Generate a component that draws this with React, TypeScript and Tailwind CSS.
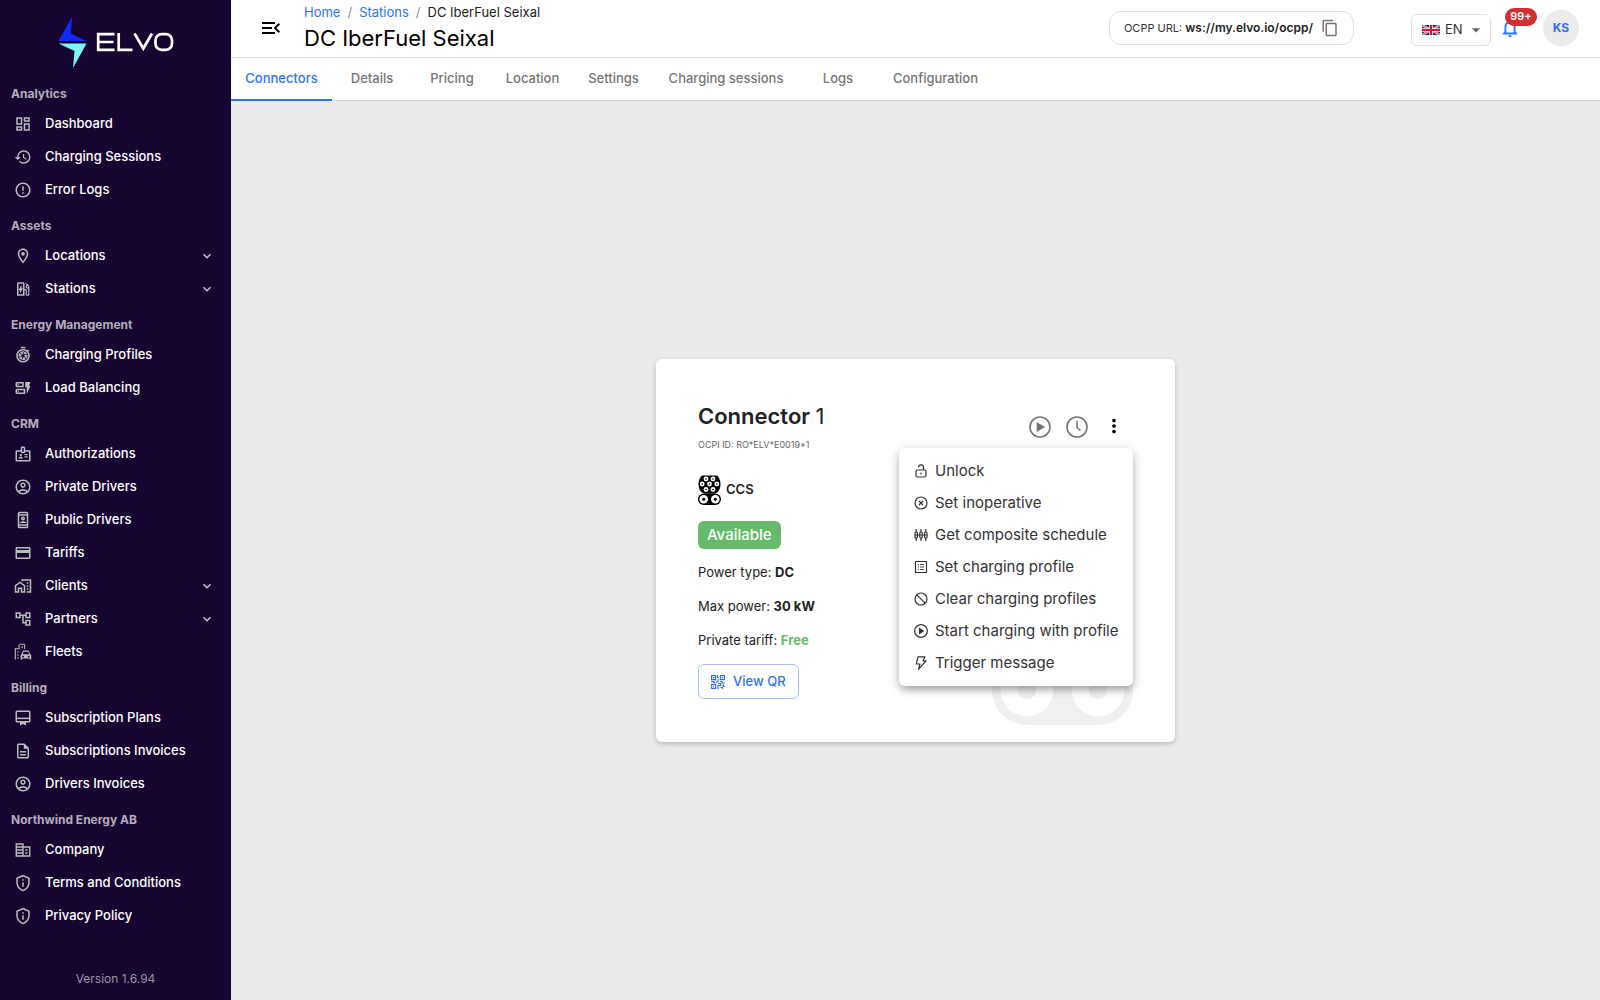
import React from "react";
import {
  MdOutlineDashboard, MdHistory, MdErrorOutline, MdOutlineLocationOn, MdOutlineEvStation, MdOutlineShutterSpeed,
  MdOutlineDynamicForm, MdOutlineBadge, MdOutlineAccountCircle, MdOutlineCreditCard, MdOutlineHomeWork,
  MdOutlineAccountTree, MdOutlineDescription, MdOutlinePrivacyTip,
  MdExpandMore, MdMenuOpen, MdContentCopy, MdNotificationsNone, MdArrowDropDown, MdMoreVert,
} from "react-icons/md";

type IconType = React.ComponentType<{ className?: string }>;

function PublicDriverIcon({ className }: { className?: string }) {
  return (
    <svg viewBox="0 0 24 24" className={className} fill="none" stroke="currentColor" strokeWidth="2" aria-hidden="true">
      <rect x="6" y="2" width="12" height="20" rx="1" />
      <path d="M6 5.200h12M6 18.500h12" />
      <circle cx="12" cy="10" r="1.700" />
      <path d="M8.800 15.400c1-1.400 5.400-1.400 6.400 0z" strokeWidth="1.400" />
    </svg>
  );
}

function PlansIcon({ className }: { className?: string }) {
  return (
    <svg viewBox="0 0 24 24" className={className} fill="none" stroke="currentColor" strokeWidth="2" aria-hidden="true">
      <rect x="3" y="3" width="18" height="14" rx="1" />
      <path d="M3 12.500h18" />
      <path d="M8 17h8v5l-4-2-4 2z" fill="currentColor" stroke="none" />
    </svg>
  );
}

function CompanyIcon({ className }: { className?: string }) {
  return (
    <svg viewBox="0 0 24 24" className={className} fill="none" stroke="currentColor" strokeWidth="1.800" aria-hidden="true">
      <path d="M3 4h9v16H3zM3 8h9M3 12h9M3 16h9" />
      <path d="M12 8h9v12h-9M15 12h3M15 16h3" />
    </svg>
  );
}

function FleetIcon({ className }: { className?: string }) {
  return (
    <svg viewBox="0 0 24 24" className={className} fill="currentColor" aria-hidden="true">
      <path d="M1 7h1.500v15H1zM2.500 7H6v1.300H2.500zM6 2h1.400v6.300H6zM7.400 1h6.800v1.300H7.400zM13.500 2h1.400v6h-1.400zM10 4h1.500v3H10zM4.500 11H6v2H4.500zM4.500 15H6v2H4.500zM4.500 19H6v2H4.500z" />
      <path fillRule="evenodd" d="M12 10h7.500l2.300 5 1.200 1v6h-2.200v-1.500H11V22H8.800v-6l1.200-1zm.8 1.600L11.500 15h9L19 11.600zM12.200 17a1.200 1.200 0 1 0 .01 0zm7.400 0a1.200 1.200 0 1 0 .01 0z" />
    </svg>
  );
}

const groups: { title: string; items: { label: string; icon: IconType; more?: boolean }[] }[] = [
  { title: "Analytics", items: [
    { label: "Dashboard", icon: MdOutlineDashboard },
    { label: "Charging Sessions", icon: MdHistory },
    { label: "Error Logs", icon: MdErrorOutline },
  ] },
  { title: "Assets", items: [
    { label: "Locations", icon: MdOutlineLocationOn, more: true },
    { label: "Stations", icon: MdOutlineEvStation, more: true },
  ] },
  { title: "Energy Management", items: [
    { label: "Charging Profiles", icon: MdOutlineShutterSpeed },
    { label: "Load Balancing", icon: MdOutlineDynamicForm },
  ] },
  { title: "CRM", items: [
    { label: "Authorizations", icon: MdOutlineBadge },
    { label: "Private Drivers", icon: MdOutlineAccountCircle },
    { label: "Public Drivers", icon: PublicDriverIcon },
    { label: "Tariffs", icon: MdOutlineCreditCard },
    { label: "Clients", icon: MdOutlineHomeWork, more: true },
    { label: "Partners", icon: MdOutlineAccountTree, more: true },
    { label: "Fleets", icon: FleetIcon },
  ] },
  { title: "Billing", items: [
    { label: "Subscription Plans", icon: PlansIcon },
    { label: "Subscriptions Invoices", icon: MdOutlineDescription },
    { label: "Drivers Invoices", icon: MdOutlineAccountCircle },
  ] },
  { title: "Northwind Energy AB", items: [
    { label: "Company", icon: CompanyIcon },
    { label: "Terms and Conditions", icon: MdOutlinePrivacyTip },
    { label: "Privacy Policy", icon: MdOutlinePrivacyTip },
  ] },
];

function Logo() {
  return (
    <a href="#" aria-label="ELVO" className="flex justify-center">
      <svg viewBox="0 0 116 52" className="h-[52px] w-[116px]" aria-hidden="true">
        <path d="M14.500 0 0.500 25H28.500L12.500 17.500z" fill="#1029f5" />
        <path d="M0.500 27.500H28.500L15 52 16.500 35z" fill="#7bf5f9" />
        <g fill="none" stroke="#fff" strokeWidth="2.700">
          <path d="M56.500 18.200H40.200V33.800H56.500M40.200 26H55.500" />
          <path d="M60.700 17V33.800H74.500" />
          <path d="M76.500 17.500 85.300 32.500 94 17.500" />
          <rect x="97.500" y="18.200" width="16.500" height="15.600" rx="6" />
        </g>
      </svg>
    </a>
  );
}

function Sidebar() {
  return (
    <aside className="flex w-[231px] shrink-0 flex-col bg-[#160530] pt-4">
      <Logo />
      <nav className="flex flex-col pt-[9px]">
        {groups.map((g) => (
          <section key={g.title} className="pb-[3px]">
            <h2 className="flex h-[30px] items-center pl-[11px] pt-[3px] text-[12px] font-bold text-[#b5aebd]">{g.title}</h2>
            {g.items.map(({ label, icon: Icon, more }) => (
              <a key={label} href="#" className="flex h-[33px] items-center pl-[14px] pr-4 text-[13px] font-medium text-white">
                <Icon className="size-[18px] shrink-0 text-[#bdbdbd]" />
                <span className="flex-1 pl-[13px]">{label}</span>
                {more && <MdExpandMore className="size-4 text-[#d0ccd6]" />}
              </a>
            ))}
          </section>
        ))}
      </nav>
      <p className="mt-auto pb-[11px] text-center text-[12px] leading-5 text-[#9a93a5]">Version 1.6.94</p>
    </aside>
  );
}

function Flag() {
  return (
    <svg viewBox="0 0 18 10" className="h-[10px] w-[18px]" aria-hidden="true">
      <path fill="#1a2a6c" d="M0 0h18v10H0z" />
      <path d="M0 0 18 10M18 0 0 10" stroke="#fff" strokeWidth="2" />
      <path d="M0 0 18 10M18 0 0 10" stroke="#d5152e" strokeWidth="0.800" />
      <path d="M9 0v10M0 5h18" stroke="#fff" strokeWidth="3.400" />
      <path d="M9 0v10M0 5h18" stroke="#d5152e" strokeWidth="2" />
    </svg>
  );
}

function Header() {
  return (
    <header className="flex h-[58px] items-center border-b border-[#e0e0e0] bg-white pb-[2px] pr-[21px]">
      <button aria-label="Collapse menu" className="ml-7 flex size-6 items-center justify-center text-black">
        <MdMenuOpen className="size-6" />
      </button>
      <div className="ml-[21px] flex-1">
        <nav aria-label="Breadcrumb" className="flex gap-[7px] text-[13px] leading-5 text-[#8a8a8a]">
          <a href="#" className="text-[#2f72f5]">Home</a>
          <span>/</span>
          <a href="#" className="text-[#2f72f5]">Stations</a>
          <span>/</span>
          <span className="text-[#222]">DC IberFuel Seixal</span>
        </nav>
        <h1 className="text-[22px] leading-8 text-black">DC IberFuel Seixal</h1>
      </div>
      <div className="mr-[57px] flex h-[34px] items-center rounded-xl border border-[#e0e0e0] px-[14px] text-[11px] text-[#333]">
        <span>OCPP URL: <b className="text-[12px] font-semibold text-[#222]">ws://my.elvo.io/ocpp/</b></span>
        <button aria-label="Copy URL" className="ml-2 text-[#757575]"><MdContentCopy className="size-[18px]" /></button>
      </div>
      <button className="mt-1 flex h-8 w-20 items-center rounded-md border border-[#e0e0e0] pl-[10px] text-[13px] text-[#333]">
        <Flag />
        <span className="ml-[5px] flex-1 text-left">EN</span>
        <MdArrowDropDown className="mr-1 size-5 text-[#666]" />
      </button>
      <button aria-label="Notifications" className="relative ml-2 text-[#2979ff]">
        <MdNotificationsNone className="size-[22px]" />
        <span className="absolute -top-[9px] left-[6px] flex h-[18px] w-8 items-center justify-center rounded-full bg-[#d32f2f] text-[11px] font-semibold text-white">99+</span>
      </button>
      <button className="ml-[22px] size-9 rounded-full bg-[#ebebeb] text-[12px] font-bold text-[#2f72f5]">KS</button>
    </header>
  );
}

function Tabs() {
  const base = "flex h-[42px] items-center justify-center text-[13px] font-medium text-[#757575]";
  return (
    <nav aria-label="Station" className="flex h-[43px] border-b border-[#d9d9d9] bg-white">
      <a href="#" aria-current="page" className="flex h-[43px] w-[101px] items-center justify-center border-b-2 border-[#2f72f5] text-[13px] font-medium text-[#2f72f5]">Connectors</a>
      <a href="#" className={`${base} w-20`}>Details</a>
      <a href="#" className={`${base} w-20`}>Pricing</a>
      <a href="#" className={`${base} w-[81px]`}>Location</a>
      <a href="#" className={`${base} w-[81px]`}>Settings</a>
      <a href="#" className={`${base} w-[144px]`}>Charging sessions</a>
      <a href="#" className={`${base} w-20`}>Logs</a>
      <a href="#" className={`${base} w-[115px]`}>Configuration</a>
    </nav>
  );
}

function CcsIcon({ className }: { className: string }) {
  const pins = [[8, 4], [15, 4], [4.200, 9], [11.500, 9], [18.800, 9], [8, 14.500], [15, 14.500]];
  return (
    <svg viewBox="0 0 23 30" className={className} aria-hidden="true">
      <path d="M4 0.500h15c1.500 1 3.500 4.500 3.500 9 0 5-3 9-6 9h-10c-3 0-6-4-6-9 0-4.500 2-8 3.500-9z" fill="currentColor" />
      <rect x="0" y="18.500" width="23" height="11.500" rx="5.700" fill="currentColor" />
      {pins.map(([x, y]) => (
        <g key={`${x}-${y}`}>
          <circle cx={x} cy={y} r="2.400" fill="#fff" />
          <circle cx={x} cy={y} r="0.800" fill="currentColor" />
        </g>
      ))}
      {[5.700, 17.300].map((x) => (
        <g key={x}>
          <circle cx={x} cy="24.300" r="4.300" fill="#fff" />
          <circle cx={x} cy="24.300" r="1.500" fill="currentColor" />
        </g>
      ))}
    </svg>
  );
}

const actions: { label: string; art: React.ReactNode }[] = [
  { label: "Unlock", art: <><rect x="2" y="6" width="10" height="7" rx="1.500" /><path d="M9.500 6V3.500a2.500 2.500 0 0 0-5-.3M7 8.500v2" /></> },
  { label: "Set inoperative", art: <><circle cx="7" cy="7" r="6" /><path d="m5 5 4 4m0-4-4 4" /></> },
  { label: "Get composite schedule", art: <><rect x="1" y="4" width="2.400" height="6" rx="1" /><rect x="5.800" y="4" width="2.400" height="6" rx="1" /><rect x="10.600" y="4" width="2.400" height="6" rx="1" /><path d="M2.200 1v3m0 6v3M7 1v3m0 6v3M11.800 1v3m0 6v3M1 7h12" /></> },
  { label: "Set charging profile", art: <><rect x="1.500" y="1.500" width="11" height="11" /><path d="M4 4.500h1m1 0h4M4 7h1m1 0h4M4 9.500h1m1 0h4" strokeWidth="0.900" /></> },
  { label: "Clear charging profiles", art: <><circle cx="7" cy="7" r="6" /><path d="m2.800 2.800 8.400 8.400" /></> },
  { label: "Start charging with profile", art: <><circle cx="7" cy="7" r="6.400" /><path d="M5.500 4.500v5L9.300 7z" fill="currentColor" /></> },
  { label: "Trigger message", art: <path d="M4 .8h7L9 4.800h3L4.500 13.300 6 8H2.300z" /> },
];

function ActionMenu() {
  return (
    <div role="menu" className="absolute right-[42px] top-[89px] z-10 w-[234px] rounded-md bg-white py-[7px] shadow-[0_5px_8px_-2px_rgba(0,0,0,0.3),0_2px_12px_rgba(0,0,0,0.18)]">
      {actions.map((a) => (
        <button key={a.label} role="menuitem" className="flex h-8 w-full items-center gap-[7px] whitespace-nowrap pl-[15px] text-[15px] text-[#333]">
          <svg viewBox="0 0 14 14" className="size-[14px] shrink-0" fill="none" stroke="currentColor" strokeWidth="1.200" strokeLinejoin="round" aria-hidden="true">{a.art}</svg>
          {a.label}
        </button>
      ))}
    </div>
  );
}

function QrIcon() {
  return (
    <svg viewBox="0 0 14 14" className="size-[14px]" fill="none" stroke="currentColor" strokeWidth="1.200" aria-hidden="true">
      <path d="M.6.6h4v4h-4zM9.400.6h4v4h-4zM.6 9.400h4v4h-4z" />
      <path d="M2 2.600h1.200M10.800 2.600H12M2 11.400h1.200M6.500 0v2.500h1.200M7 4v3H5M0 6.500h3M2 7.500h2M9 6.500h2v1.500h3M7 8.500h2.500v2H7V14M11 10h1.500v1.500H14M9.500 12.500h2V14" />
    </svg>
  );
}

function ConnectorCard() {
  return (
    <article className="relative w-[519px] rounded-md bg-white px-[42px] pb-[43px] pt-[41px] text-[#212121] shadow-[0_2px_5px_rgba(0,0,0,0.22)]">
      <div className="flex items-start justify-between">
        <div>
          <h2 className="text-[22px] font-semibold leading-8">Connector <span className="font-normal">1</span></h2>
          <p className="pt-[3px] text-[9px] leading-5 text-[#666]">OCPI ID: RO*ELV*E0019*1</p>
        </div>
        <div className="flex items-center gap-[15px] pr-2 pt-[15px] text-[#757575]">
          <button aria-label="Start">
            <svg viewBox="0 0 22 22" className="size-[22px]" fill="none" stroke="currentColor" strokeWidth="1.600" aria-hidden="true"><circle cx="11" cy="11" r="10" /><path d="M8.500 7.500v7l6-3.500z" fill="currentColor" /></svg>
          </button>
          <button aria-label="Schedule">
            <svg viewBox="0 0 22 22" className="size-[22px]" fill="none" stroke="currentColor" strokeWidth="1.600" aria-hidden="true"><circle cx="11" cy="11" r="10" /><path d="M11 5v6.500l3.500 3" /></svg>
          </button>
          <button aria-label="More actions" className="pb-[2px] text-black"><MdMoreVert className="size-[22px]" /></button>
        </div>
      </div>
      <div className="flex items-center gap-[5px] pt-5">
        <CcsIcon className="h-[30px] w-[23px] text-black" />
        <span className="text-[13px] font-semibold">CCS</span>
      </div>
      <div className="pt-4">
        <span className="inline-flex h-7 items-center rounded-md bg-[#66bb6a] px-[9px] text-[15px] font-medium text-white">Available</span>
      </div>
      <div className="flex flex-col gap-[14px] pt-[13px] text-[13px] leading-5">
        <p>Power type: <b className="font-bold">DC</b></p>
        <p>Max power: <b className="font-bold">30 kW</b></p>
        <p>Private tariff: <b className="font-bold text-[#66bb6a]">Free</b></p>
      </div>
      <button className="mt-[14px] flex h-[35px] items-center gap-2 rounded-md border border-[#a3c2fb] px-3 text-[13px] font-medium text-[#2f72f5]">
        <QrIcon />
        View QR
      </button>
      <CcsIcon className="absolute bottom-[17px] right-[42px] h-[184px] w-[141px] text-[#f0f0f0]" />
      <ActionMenu />
    </article>
  );
}

export default function App() {
  return (
    <div className="flex min-h-screen bg-[#ebebeb] font-[Inter,sans-serif]">
      <Sidebar />
      <div className="flex min-w-0 flex-1 flex-col">
        <Header />
        <Tabs />
        <main className="flex flex-1 items-center justify-center">
          <ConnectorCard />
        </main>
      </div>
    </div>
  );
}
